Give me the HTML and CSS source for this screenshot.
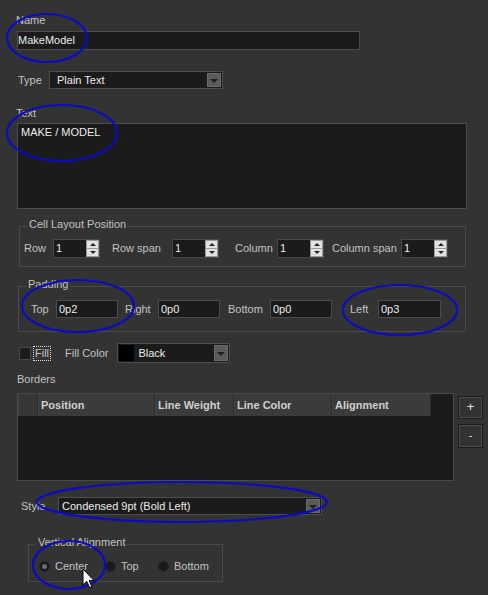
FILE: index.html
```html
<!DOCTYPE html>
<html>
<head>
<meta charset="utf-8">
<link rel="stylesheet" href="styles.css">
</head>
<body>
<div class="page">
  <div class="label name-label">Name</div>
  <div class="input name-input">MakeModel</div>

  <div class="type-row">
    <span class="label type-label">Type</span>
    <div class="combo type-combo"><span class="combo-text">Plain Text</span><span class="drop"><i></i></span></div>
  </div>

  <div class="label text-label">Text</div>
  <div class="input textarea">MAKE / MODEL</div>

  <fieldset class="group cell-group">
    <legend>Cell Layout Position</legend>
    <div class="cell-grid">
      <span class="label">Row</span>
      <div class="spin"><span class="spin-val">1</span><span class="spin-btns"><b class="up"></b><b class="down"></b></span></div>
      <span class="label pl12">Row span</span>
      <div class="spin"><span class="spin-val">1</span><span class="spin-btns"><b class="up"></b><b class="down"></b></span></div>
      <span class="label pl16">Column</span>
      <div class="spin"><span class="spin-val">1</span><span class="spin-btns"><b class="up"></b><b class="down"></b></span></div>
      <span class="label pl8">Column span</span>
      <div class="spin"><span class="spin-val">1</span><span class="spin-btns"><b class="up"></b><b class="down"></b></span></div>
    </div>
  </fieldset>

  <fieldset class="group pad-group">
    <legend>Padding</legend>
    <div class="pad-grid">
      <span class="label pl8">Top</span>
      <div class="input small">0p2</div>
      <span class="label pl7">Right</span>
      <div class="input small">0p0</div>
      <span class="label pl8">Bottom</span>
      <div class="input small">0p0</div>
      <span class="label pl18">Left</span>
      <div class="input small">0p3</div>
    </div>
  </fieldset>

  <div class="fill-row">
    <span class="checkbox"></span>
    <span class="label fill-label">Fill</span>
    <span class="label fillcolor-label">Fill Color</span>
    <div class="combo fill-combo"><span class="swatch"></span><span class="combo-text">Black</span><span class="drop"><i></i></span></div>
  </div>

  <div class="label borders-label">Borders</div>
  <div class="borders-row">
    <div class="table">
      <div class="thead">
        <span class="th c0"></span>
        <span class="th c1">Position</span>
        <span class="th c2">Line Weight</span>
        <span class="th c3">Line Color</span>
        <span class="th c4">Alignment</span>
      </div>
    </div>
    <div class="side-btns">
      <div class="btn">+</div>
      <div class="btn minus">-</div>
    </div>
  </div>

  <div class="style-row">
    <span class="label style-label">Style</span>
    <div class="combo style-combo"><span class="combo-text">Condensed 9pt (Bold Left)</span><span class="drop"><i></i></span></div>
  </div>

  <fieldset class="group va-group">
    <legend>Vertical Alignment</legend>
    <div class="radio-row">
      <span class="radio-item w-center"><span class="radio checked"></span><span class="label">Center</span></span>
      <span class="radio-item w-top"><span class="radio"></span><span class="label">Top</span></span>
      <span class="radio-item"><span class="radio"></span><span class="label">Bottom</span></span>
    </div>
  </fieldset>

  <svg class="annotations" width="488" height="595" viewBox="0 0 488 595">
    <g fill="none" stroke="#0b0bc4" stroke-width="2.2">
      <ellipse cx="47" cy="38" rx="40" ry="24"/>
      <ellipse cx="62" cy="133" rx="55" ry="28"/>
      <ellipse cx="78" cy="306" rx="56" ry="26"/>
      <ellipse cx="400" cy="310" rx="57" ry="25"/>
      <ellipse cx="182" cy="502" rx="145" ry="20"/>
      <ellipse cx="69" cy="565" rx="36" ry="24"/>
    </g>
  </svg>

  <svg class="cursor" width="14" height="22" viewBox="0 0 14 22">
    <path d="M1 1 L1 17 L4.8 13.4 L7.6 19.6 L9.8 18.6 L7.1 12.6 L12 12.6 Z" fill="#fff" stroke="#000" stroke-width="1" stroke-linejoin="round"/>
  </svg>
</div>
</body>
</html>
```

FILE: styles.css
```css
html, body {
  margin: 0;
  padding: 0;
  background: #333333;
}

.page {
  position: relative;
  width: 488px;
  height: 595px;
  overflow: hidden;
  background: #333333;
  font-family: "Liberation Sans", Arial, sans-serif;
  font-size: 11px;
  line-height: 13px;
  color: #c2c2c2;
}

.label {
  color: #c2c2c2;
  white-space: nowrap;
}

.input {
  box-sizing: border-box;
  background: #1b1b1b;
  border: 1px solid #4c4c4c;
  color: #ececec;
  white-space: nowrap;
}

/* Name */
.name-label {
  padding-top: 14px;
  margin-left: 16px;
}
.name-input {
  margin: 4px 0 0 17px;
  width: 343px;
  height: 19px;
  line-height: 17px;
  padding-left: 0;
}

/* Type */
.type-row {
  display: flex;
  align-items: center;
  margin-top: 21px;
  margin-left: 18px;
}
.type-label {
  width: 31px;
}
.combo {
  box-sizing: border-box;
  position: relative;
  display: flex;
  align-items: center;
  background: #1b1b1b;
  border: 1px solid #4c4c4c;
  color: #ececec;
}
.combo-text {
  flex: 1;
  padding-left: 7px;
  white-space: nowrap;
}
.drop {
  box-sizing: border-box;
  width: 14px;
  align-self: stretch;
  margin: 1px 1px 1px 0;
  background: #5b5b5b;
  border: 1px solid #6a6a6a;
  display: flex;
  align-items: center;
  justify-content: center;
}
.drop i {
  display: block;
  width: 0;
  height: 0;
  margin-top: 2px;
  border-left: 4px solid transparent;
  border-right: 4px solid transparent;
  border-top: 4px solid #1e1e1e;
}
.type-combo {
  width: 174px;
  height: 18px;
}

/* Text */
.text-label {
  margin-top: 18px;
  margin-left: 16px;
}
.textarea {
  margin: 3px 0 0 17px;
  width: 450px;
  height: 86px;
  padding: 2px 0 0 3px;
}

/* Group boxes */
.group {
  box-sizing: border-box;
  margin: 0;
  border: 1px solid #4a4a4a;
  padding: 0 4px;
  min-width: 0;
}
.group legend {
  margin-left: 3px;
  padding: 0 2px 4px 2px;
  line-height: 13px;
  color: #c2c2c2;
}

.cell-group {
  margin: 9px 0 0 19px;
  width: 447px;
  padding-top: 4px;
  padding-bottom: 8px;
}
.cell-grid {
  display: grid;
  grid-template-columns: 29px 47px 72px 47px 58px 47px 77px 47px;
  align-items: center;
}
.pl7 { padding-left: 7px; }
.pl8 { padding-left: 8px; }
.pl12 { padding-left: 12px; }
.pl16 { padding-left: 16px; }
.pl18 { padding-left: 18px; }

.spin {
  box-sizing: border-box;
  height: 19px;
  display: flex;
  background: #1b1b1b;
  border: 1px solid #474747;
  color: #ececec;
}
.spin-val {
  flex: 1;
  line-height: 17px;
  padding-left: 2px;
}
.spin-btns {
  width: 13px;
  display: flex;
  flex-direction: column;
}
.spin-btns b {
  flex: 1;
  box-sizing: border-box;
  background: #e2e2e2;
  border: 1px solid #9a9a9a;
  display: flex;
  align-items: center;
  justify-content: center;
}
.spin-btns b.down {
  border-top: none;
}
.spin-btns b::after {
  content: "";
  width: 0;
  height: 0;
  border-left: 3px solid transparent;
  border-right: 3px solid transparent;
}
.spin-btns b.up::after {
  border-bottom: 3px solid #222;
}
.spin-btns b.down::after {
  border-top: 3px solid #222;
}

.pad-group {
  margin: 11px 0 0 18px;
  width: 448px;
  padding-top: 5px;
  padding-bottom: 13px;
}
.pad-grid {
  display: grid;
  grid-template-columns: 33px 62px 40px 62px 50px 62px 46px 63px;
  align-items: center;
}
.input.small {
  height: 18px;
  line-height: 16px;
  padding-left: 2px;
}

/* Fill */
.fill-row {
  display: flex;
  align-items: center;
  margin: 11px 0 0 19px;
}
.checkbox {
  box-sizing: border-box;
  width: 12px;
  height: 13px;
  background: #1c1c1c;
  border: 1px solid #474747;
}
.fill-label {
  margin-left: 3px;
  padding: 0 1px;
  outline: 1px dotted #e0e0e0;
  outline-offset: 0;
  line-height: 13px;
}
.fillcolor-label {
  margin-left: 15px;
}
.fill-combo {
  margin-left: 9px;
  width: 113px;
  height: 20px;
}
.swatch {
  width: 15px;
  align-self: stretch;
  margin: 1px 0 1px 1px;
  background: #000;
}
.fill-combo .combo-text {
  padding-left: 4px;
}

/* Borders */
.borders-label {
  margin: 10px 0 0 17px;
}
.borders-row {
  display: flex;
  align-items: flex-start;
  margin: 7px 0 0 17px;
}
.table {
  box-sizing: border-box;
  width: 437px;
  height: 88px;
  background: #1b1b1b;
  border: 1px solid #4a4a4a;
}
.thead {
  display: flex;
  height: 22px;
}
.th {
  box-sizing: border-box;
  background: #3b3b3b;
  border-right: 1px solid #2c2c2c;
  border-left: 1px solid #444;
  color: #d0d0d0;
  font-weight: bold;
  line-height: 22px;
  padding-left: 2px;
  white-space: nowrap;
}
.c0 { width: 20px; background: #363636; }
.c1 { width: 117px; }
.c2 { width: 79px; }
.c3 { width: 98px; }
.c4 { width: 99px; }

.side-btns {
  display: flex;
  flex-direction: column;
  gap: 5px;
  margin: 3px 0 0 4px;
}
.btn {
  box-sizing: border-box;
  width: 25px;
  height: 23px;
  background: #333;
  border: 1px solid #1c1c1c;
  box-shadow: inset 0 0 0 1px #4a4a4a;
  color: #e6e6e6;
  font-size: 13px;
  line-height: 20px;
  text-align: center;
}
.btn.minus {
  height: 24px;
  font-size: 11px;
}

/* Style */
.style-row {
  display: flex;
  align-items: center;
  margin: 16px 0 0 21px;
}
.style-label {
  width: 37px;
}
.style-combo {
  width: 264px;
  height: 18px;
}
.style-combo .combo-text {
  padding-left: 3px;
}

/* Vertical Alignment */
.va-group {
  margin: 21px 0 0 28px;
  width: 195px;
  padding-top: 6px;
  padding-bottom: 7px;
}
.radio-row {
  display: flex;
  align-items: center;
  height: 15px;
  padding-left: 6px;
}
.radio-item {
  display: flex;
  align-items: center;
  gap: 5px;
}
.w-center { width: 66px; }
.w-top { width: 53px; }
.radio {
  box-sizing: border-box;
  width: 11px;
  height: 11px;
  border-radius: 50%;
  background: #1a1a1a;
  border: 1px solid #262626;
  display: flex;
  align-items: center;
  justify-content: center;
}
.radio.checked::after {
  content: "";
  width: 5px;
  height: 5px;
  border-radius: 50%;
  background: #6e6e6e;
}

/* Overlays */
.annotations {
  position: absolute;
  left: 0;
  top: 0;
  pointer-events: none;
}
.cursor {
  position: absolute;
  left: 82px;
  top: 568px;
}
```
